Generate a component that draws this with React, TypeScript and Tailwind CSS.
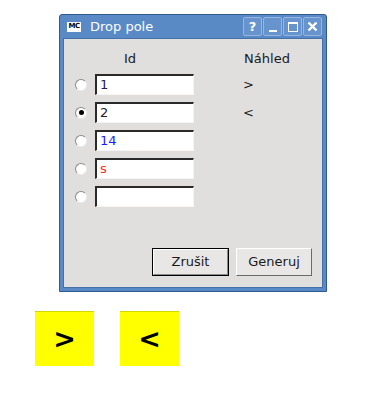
import React from "react";

const ui = { fontFamily: '"DejaVu Sans", Verdana, sans-serif' };

type Row = { value: string; color: string; checked?: boolean; preview?: string };

const rows: Row[] = [
  { value: "1", color: "text-[#2b1b55]", preview: ">" },
  { value: "2", color: "text-[#222]", checked: true, preview: "<" },
  { value: "14", color: "text-[#1c1cff]" },
  { value: "s", color: "text-[#ff2a2a]" },
  { value: "", color: "text-black" },
];

const TitleButton = ({ children }: { children: React.ReactNode }) => (
  <div className="flex h-[19px] w-[19px] items-center justify-center rounded-[2px] border border-[#95b6e2] bg-[#6894ce]">
    {children}
  </div>
);

const Radio = ({ checked }: { checked?: boolean }) => (
  <div className="flex h-[12px] w-[12px] items-center justify-center rounded-full border border-[#8a8a8a] border-b-[#ececec] border-r-[#ececec] bg-white">
    {checked && <div className="h-[5px] w-[5px] rounded-full bg-black" />}
  </div>
);

const Entry = ({ value, color }: { value: string; color: string }) => (
  <div className="flex h-[21px] w-[99px] items-center border-t-2 border-l-2 border-t-[#2a2a2a] border-l-[#2a2a2a] border-b border-r border-b-[#f4f4f4] border-r-[#f4f4f4] bg-white pl-[3px]">
    <span className={`text-[13px] ${color}`}>{value}</span>
  </div>
);

const Window = () => (
  <div
    className="ml-[59px] mt-[14px] flex h-[278px] w-[268px] flex-col rounded-t-[3px] border border-[#2f5a8e] bg-[#5a8ac6]"
    style={ui}
  >
    {/* title bar */}
    <div className="flex h-[23px] items-center pl-[7px] pr-[4px]">
      <div className="flex h-[10px] w-[14px] items-center justify-center bg-white">
        <span className="text-[7px] font-bold leading-none tracking-[-0.5px] text-black">MC</span>
      </div>
      <span className="ml-[9px] text-[13px] text-white">Drop pole</span>
      <div className="ml-auto flex gap-[1px]">
        <TitleButton>
          <span className="text-[13px] font-bold leading-none text-white">?</span>
        </TitleButton>
        <TitleButton>
          <div className="mt-[9px] h-[2px] w-[8px] bg-white" />
        </TitleButton>
        <TitleButton>
          <div className="h-[10px] w-[10px] border border-t-2 border-white" />
        </TitleButton>
        <TitleButton>
          <svg width="11" height="11" viewBox="0 0 11 11">
            <path d="M1.5 1.5 L9.5 9.5 M9.5 1.5 L1.5 9.5" stroke="white" strokeWidth="2.4" />
          </svg>
        </TitleButton>
      </div>
    </div>

    {/* content */}
    <div className="mx-[3px] mb-[3px] flex flex-1 flex-col border border-[#4570a8] bg-[#e0dfde] text-[13px] text-[#1a1a1a]">
      <div className="mt-[11px] flex h-[18px] items-center">
        <span className="ml-[60px]">Id</span>
        <span className="ml-[108px]">Náhled</span>
      </div>
      <div className="mt-[6px] flex flex-col gap-[7px]">
        {rows.map((r, i) => (
          <div key={i} className="flex h-[21px] items-center">
            <div className="w-[31px] pl-[11px]">
              <Radio checked={r.checked} />
            </div>
            <Entry value={r.value} color={r.color} />
            {r.preview && <span className="ml-[49px]">{r.preview}</span>}
          </div>
        ))}
      </div>
      <div className="mt-auto mb-[11px] flex gap-[7px] pl-[88px]">
        <button className="h-[28px] w-[77px] border border-black bg-[#e8e7e6]">
          <div className="flex h-full w-full items-center justify-center border border-t-white border-l-white border-b-[#8a8a8a] border-r-[#8a8a8a]">
            Zrušit
          </div>
        </button>
        <button className="flex h-[28px] w-[76px] items-center justify-center border border-t-white border-l-white border-b-[#6a6a6a] border-r-[#6a6a6a] bg-[#e8e7e6]">
          Generuj
        </button>
      </div>
    </div>
  </div>
);

const Tile = ({ glyph }: { glyph: string }) => (
  <div
    className="flex h-[55px] w-[59px] items-center justify-center border-t border-[#d6d600] bg-[#ffff00] text-[27px] font-bold text-black"
    style={{ fontFamily: '"DejaVu Sans", sans-serif' }}
  >
    {glyph}
  </div>
);

export default function App() {
  return (
    <div className="h-[393px] w-[376px] overflow-hidden bg-white">
      <Window />
      <div className="ml-[35px] mt-[19px] flex gap-[26px]">
        <Tile glyph=">" />
        <Tile glyph="<" />
      </div>
    </div>
  );
}
